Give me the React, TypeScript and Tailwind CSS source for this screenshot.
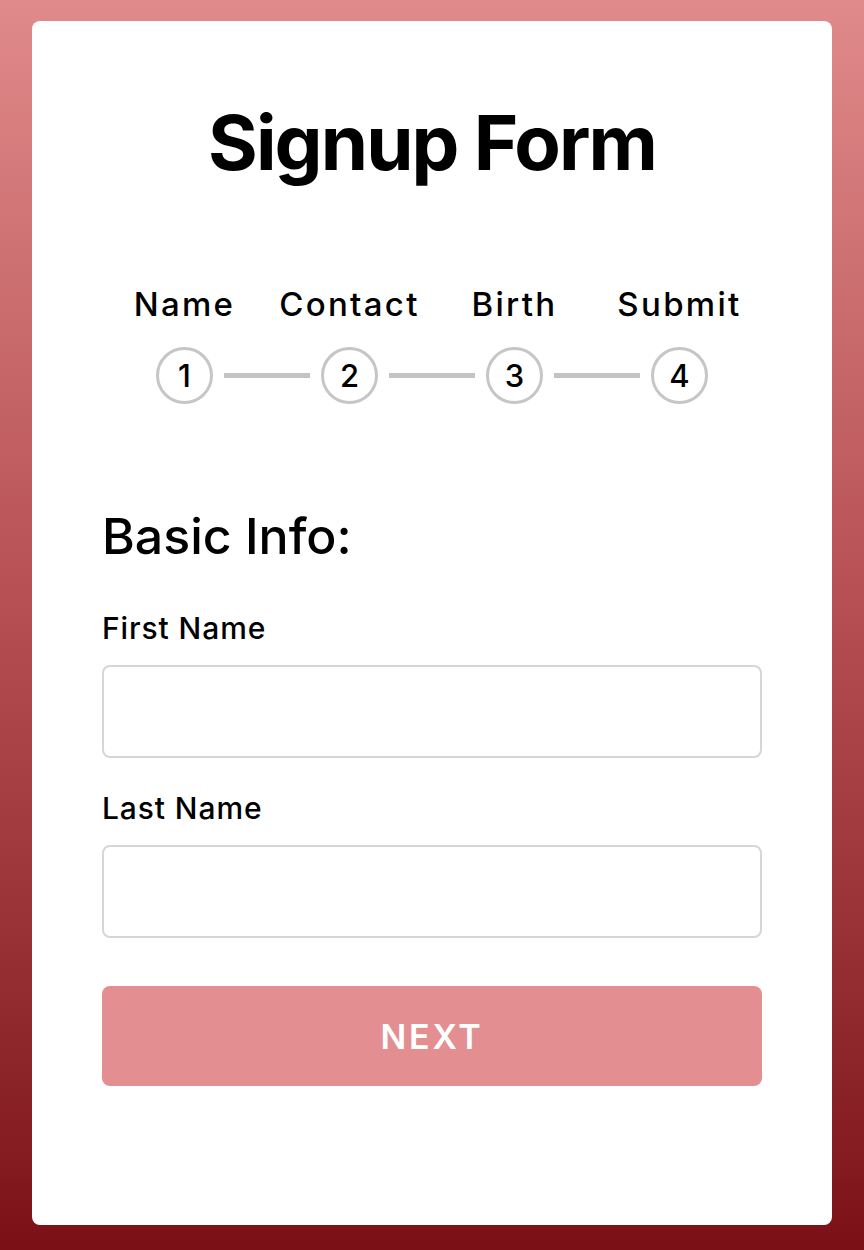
const steps = ['Name', 'Contact', 'Birth', 'Submit'];

function StepCircle({ n }: { n: number }) {
  return (
    <div className="flex h-[57px] w-[57px] shrink-0 items-center justify-center rounded-full border-[3px] border-[#c6c6c6] text-[31px] font-medium leading-none text-black">
      {n}
    </div>
  );
}

function Field({ label }: { label: string }) {
  return (
    <div className="flex flex-col">
      <label className="text-[30px] font-medium leading-[36px] tracking-[0.03em] text-black">{label}</label>
      <input
        type="text"
        className="mt-[19px] h-[93px] w-full rounded-lg border-2 border-[#d6d6d6] bg-white px-4 text-2xl outline-none"
      />
    </div>
  );
}

export default function App() {
  return (
    <div className="min-h-screen w-full bg-gradient-to-b from-[#e08a8b] via-[#b44d52] to-[#7b1017] pt-[21px] pb-[25px] font-['Inter',sans-serif]">
      <div className="mx-auto flex h-[1204px] w-[800px] flex-col rounded-lg bg-white px-[70px]">
        <h1 className="mt-[71px] text-center text-[76px] font-bold leading-[100px] tracking-tight text-black">
          Signup Form
        </h1>

        <div className="mt-[92px] grid grid-cols-4 text-center text-[33px] font-medium leading-[40px] tracking-[0.07em] text-black">
          {steps.map((s) => (
            <div key={s}>{s}</div>
          ))}
        </div>

        <div className="mt-[23px] flex items-center px-[54px]">
          {[1, 2, 3, 4].map((n) => (
            <div key={n} className={n < 4 ? 'flex flex-1 items-center' : 'flex items-center'}>
              <StepCircle n={n} />
              {n < 4 && <div className="mx-[11px] h-[5px] flex-1 bg-[#c4c4c4]" />}
            </div>
          ))}
        </div>

        <h2 className="mt-[100px] text-[50px] font-medium leading-[64px] text-black">Basic Info:</h2>

        <div className="mt-[42px] flex flex-col gap-[32px]">
          <Field label="First Name" />
          <Field label="Last Name" />
        </div>

        <button className="mt-[48px] h-[100px] w-full rounded-lg bg-[#e38f91] text-[34px] font-semibold tracking-[0.08em] text-white">
          NEXT
        </button>
      </div>
    </div>
  );
}
